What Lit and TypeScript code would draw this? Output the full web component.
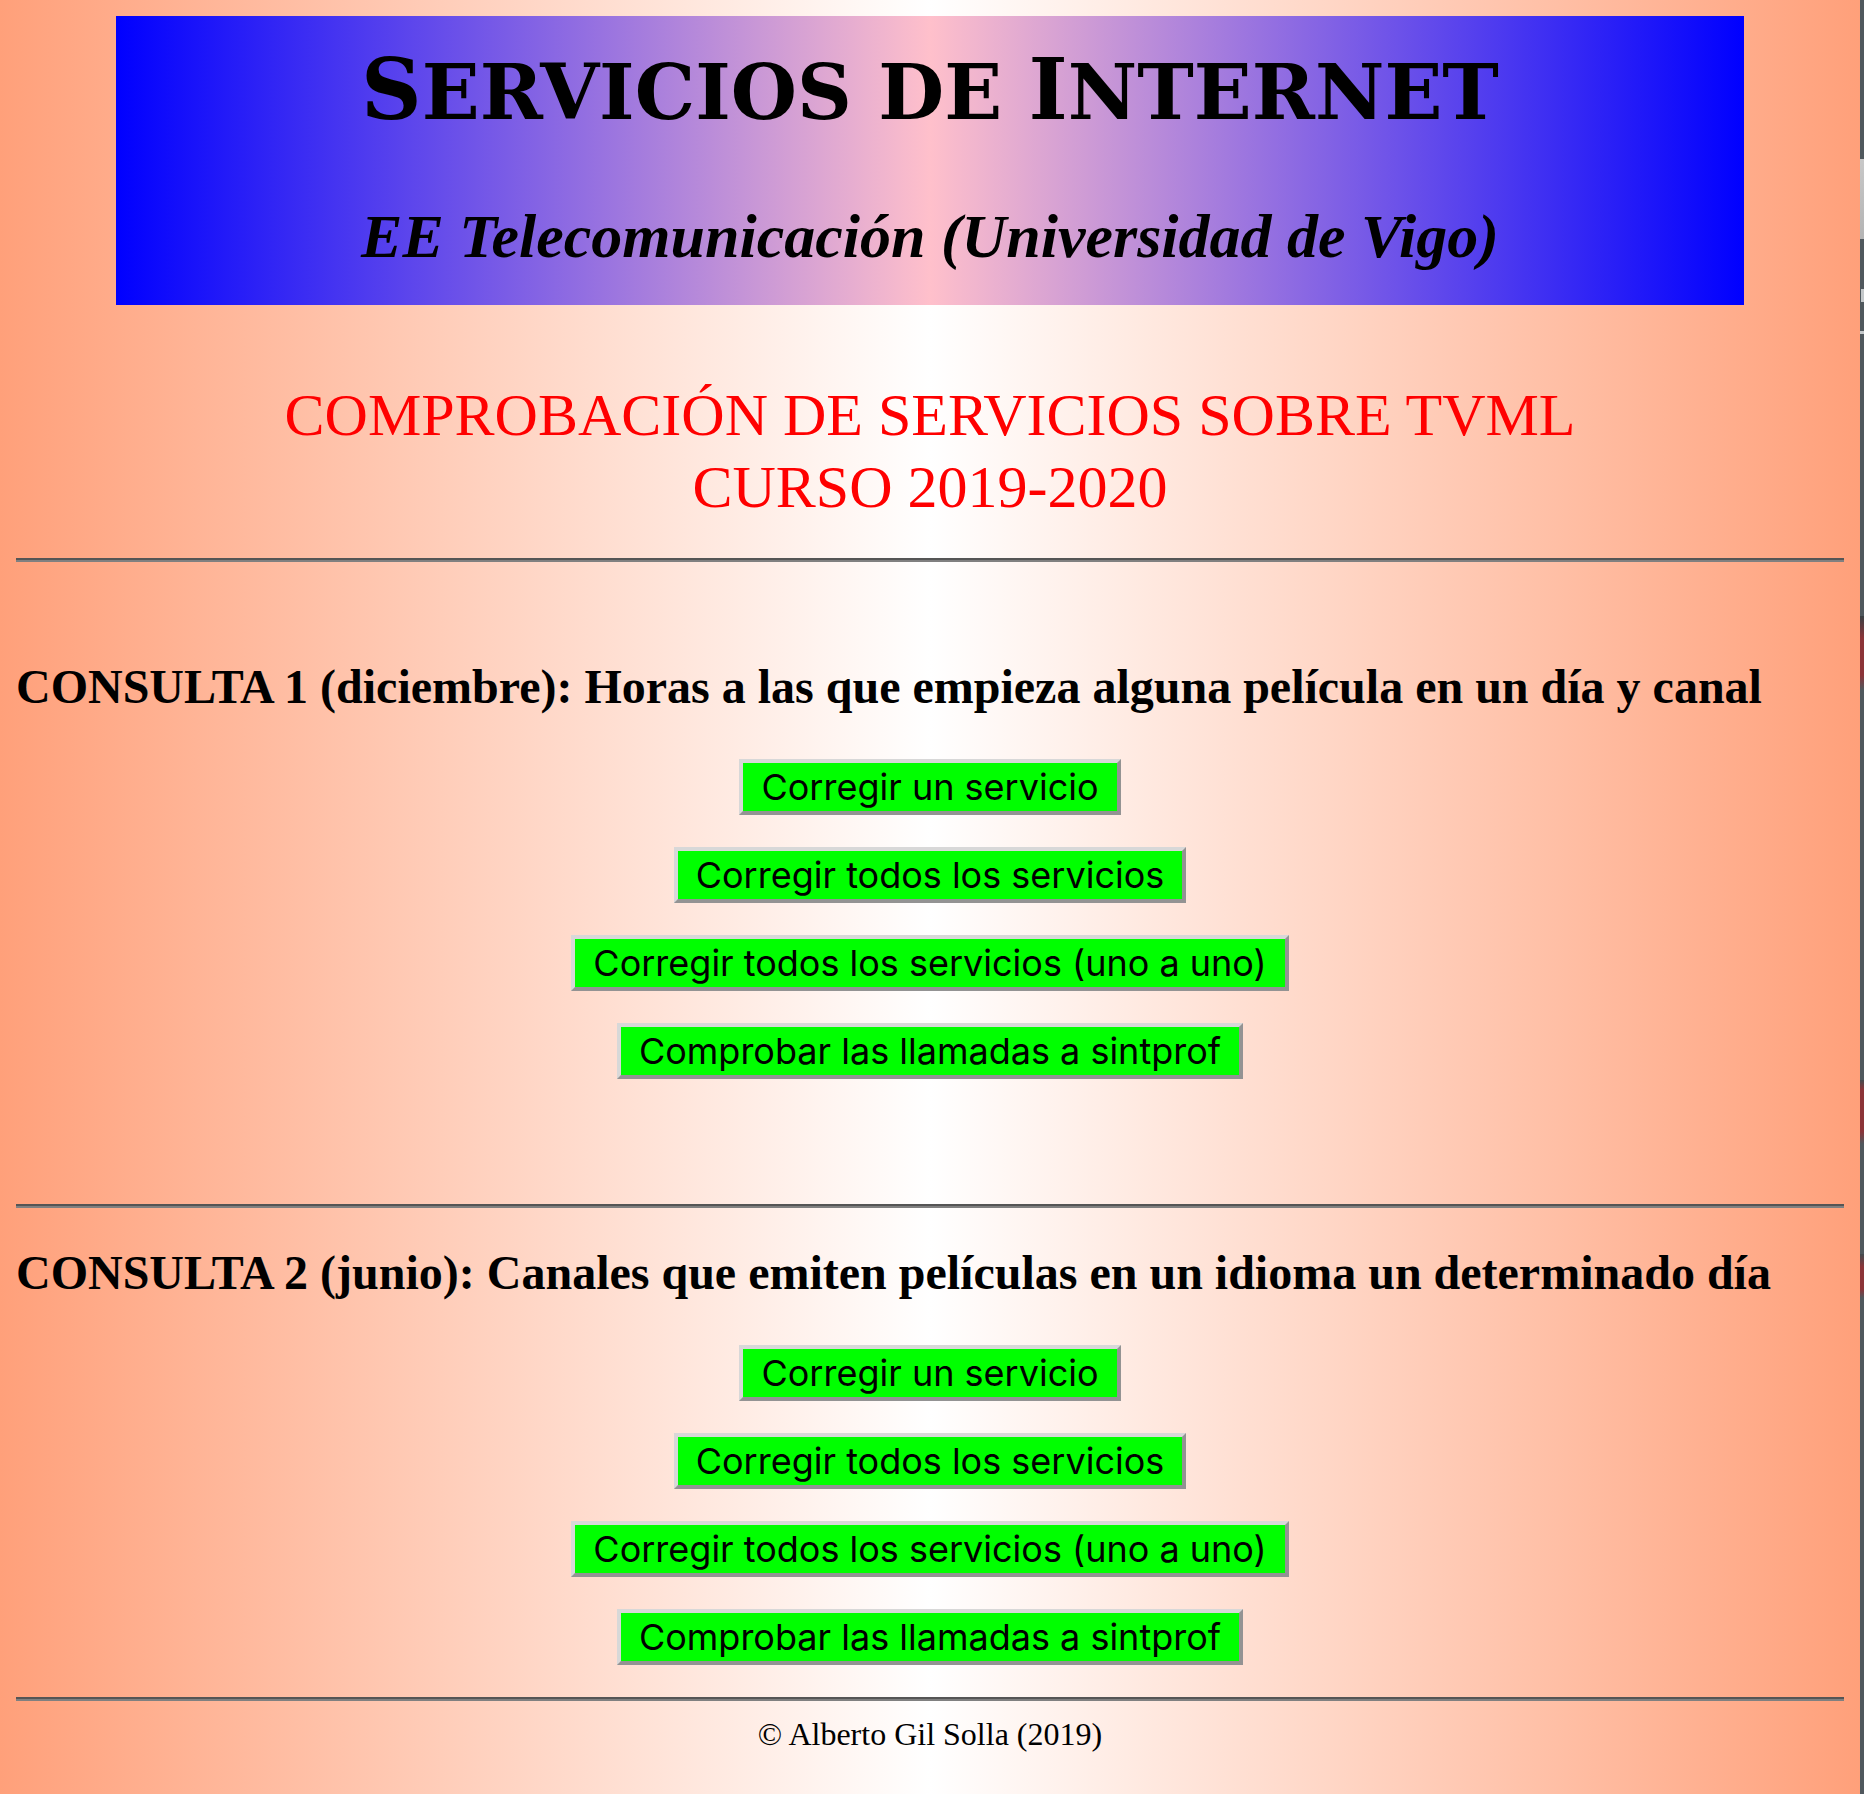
import { LitElement, html, css } from "lit";
import { customElement, property } from "lit/decorators.js";

const ACTIONS = [
  "Corregir un servicio",
  "Corregir todos los servicios",
  "Corregir todos los servicios (uno a uno)",
  "Comprobar las llamadas a sintprof",
];

@customElement("query-section")
class QuerySection extends LitElement {
  @property() heading = "";

  static styles = css`
    :host {
      display: block;
    }
    .heading {
      margin: 0;
      font-size: 48px;
      line-height: 56px;
      font-weight: bold;
    }
    .actions {
      display: flex;
      flex-direction: column;
      align-items: center;
      gap: 32px;
      margin-top: 44px;
    }
    .action {
      box-sizing: border-box;
      margin: 0;
      padding: 0 18px;
      border: 4px solid;
      border-color: #d8d8d8 #939393 #939393 #d8d8d8;
      border-radius: 0;
      background: #00ff00;
      color: #000;
      font-family: Inter, "Liberation Sans", sans-serif;
      font-size: 36px;
      line-height: 48px;
      cursor: pointer;
    }
  `;

  render() {
    return html`
      <h2 class="heading">${this.heading}</h2>
      <div class="actions">
        ${ACTIONS.map((label) => html`<button class="action" type="button">${label}</button>`)}
      </div>
    `;
  }
}

@customElement("app-root")
class AppRoot extends LitElement {
  static styles = css`
    :host {
      display: grid;
      grid-template-columns: minmax(0, 1fr) 4px;
      min-height: 100vh;
      color: #000;
      font-family: "Liberation Serif", "Times New Roman", serif;
    }
    .page {
      box-sizing: border-box;
      padding: 16px;
      background: linear-gradient(to right, #ffa07a, #fff, #ffa07a);
    }
    .edge {
      background:
        linear-gradient(#c8c8c8, #b4b4b4) 0 159px / 4px 80px no-repeat,
        linear-gradient(#c4c8ca, #c4c8ca) 1px 289px / 3px 13px no-repeat,
        linear-gradient(#c4c8ca, #c4c8ca) 0 331px / 4px 3px no-repeat,
        linear-gradient(#3a4044, #8c3438 30%, #8c3438 80%, #50585d) 0 616px / 4px 74px no-repeat,
        linear-gradient(#444b4f, #8c3438 15%, #8c3438 80%, #50585d) 0 1080px / 4px 64px no-repeat,
        linear-gradient(#444b4f, #8c3438 30%, #8c3438 80%, #50585d) 0 1254px / 4px 44px no-repeat,
        #50585d;
    }
    .banner {
      margin: 0 100px;
      padding: 26px 0 21px;
      background: linear-gradient(to right, #0000ff, #ffc0cb, #0000ff);
      text-align: center;
    }
    .title {
      margin: 0;
      font-family: Copperplate, "DejaVu Serif", serif;
      font-size: 84px;
      line-height: 96px;
      font-weight: bold;
      white-space: nowrap;
    }
    .small {
      font-size: 76px;
      line-height: 0;
      text-transform: uppercase;
    }
    .school {
      margin: 50px 0 0;
      font-family: "Brush Script MT", "Liberation Serif", serif;
      font-size: 62px;
      line-height: 96px;
      font-style: italic;
      font-weight: bold;
      white-space: nowrap;
    }
    .subject {
      margin: 74px 0 35px;
      color: #ff0000;
      font-size: 60px;
      line-height: 72px;
      text-align: center;
    }
    .rule {
      height: 0;
      margin: 0;
      border: 0;
      border-top: 2px solid #555;
      border-bottom: 2px solid #808080;
    }
    .first {
      margin: 97px 0 125px;
    }
    .second {
      margin: 37px 0 32px;
    }
    .footer {
      margin-top: 16px;
      font-size: 32px;
      line-height: 34px;
      text-align: center;
    }
  `;

  render() {
    return html`
      <main class="page">
        <header class="banner">
          <h1 class="title">S<span class="small">ervicios de </span>I<span class="small">nternet</span></h1>
          <p class="school">EE Telecomunicación (Universidad de Vigo)</p>
        </header>
        <p class="subject">COMPROBACIÓN DE SERVICIOS SOBRE TVML<br />CURSO 2019-2020</p>
        <hr class="rule" />
        <query-section
          class="first"
          heading="CONSULTA 1 (diciembre): Horas a las que empieza alguna película en un día y canal"
        ></query-section>
        <hr class="rule" />
        <query-section
          class="second"
          heading="CONSULTA 2 (junio): Canales que emiten películas en un idioma un determinado día"
        ></query-section>
        <hr class="rule" />
        <footer class="footer">© Alberto Gil Solla (2019)</footer>
      </main>
      <div class="edge"></div>
    `;
  }
}
